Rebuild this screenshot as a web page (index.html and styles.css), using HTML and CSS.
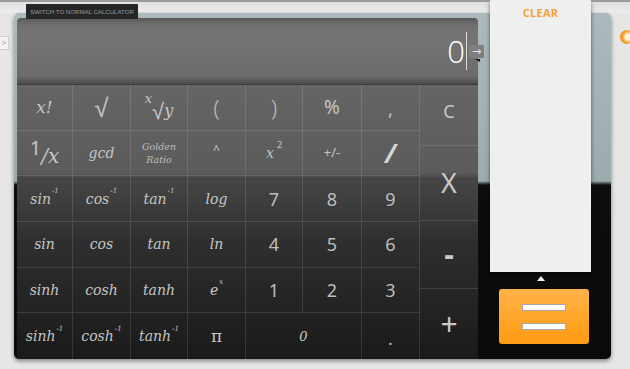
FILE: index.html
```html
<!DOCTYPE html>
<html>
<head>
<meta charset="utf-8">
<link rel="stylesheet" href="styles.css">
</head>
<body>
<div class="topbar"></div>
<div class="tooltip">SWITCH TO NORMAL CALCULATOR</div>
<div class="sidetab">&gt;</div>
<div class="orb"></div>
<div class="frame">
  <div class="calc">
    <div class="display">
      <span class="value">0</span><span class="cursor"></span>
      <span class="arrow">&#8594;</span>
      <span class="notch"></span>
    </div>
    <div class="keypad">
      <div class="grid">
        <div class="key fn big">x!</div>
        <div class="key sym root">&#8730;</div>
        <div class="key xrt"><i class="rx">x</i><span class="rs">&#8730;</span><i class="ry">y</i></div>
        <div class="key sym paren">(</div>
        <div class="key sym paren">)</div>
        <div class="key sym pct">%</div>
        <div class="key sym comma">,</div>

        <div class="key inv"><span class="one">1</span><i class="slx">/x</i></div>
        <div class="key fn">gcd</div>
        <div class="key fn golden">Golden<br>Ratio</div>
        <div class="key sym caret">^</div>
        <div class="key fn sq">x<sup>2</sup></div>
        <div class="key sym pm">+/-</div>
        <div class="key sym slash">/</div>

        <div class="key fn">sin<sup>-1</sup></div>
        <div class="key fn">cos <sup>-1</sup></div>
        <div class="key fn">tan <sup>-1</sup></div>
        <div class="key fn">log</div>
        <div class="key num">7</div>
        <div class="key num">8</div>
        <div class="key num">9</div>

        <div class="key fn">sin</div>
        <div class="key fn">cos</div>
        <div class="key fn">tan</div>
        <div class="key fn">ln</div>
        <div class="key num">4</div>
        <div class="key num">5</div>
        <div class="key num">6</div>

        <div class="key fn">sinh</div>
        <div class="key fn">cosh</div>
        <div class="key fn">tanh</div>
        <div class="key fn">e<sup>x</sup></div>
        <div class="key num">1</div>
        <div class="key num">2</div>
        <div class="key num">3</div>

        <div class="key fn last">sinh<sup>-1</sup></div>
        <div class="key fn last">cosh<sup>-1</sup></div>
        <div class="key fn last">tanh<sup>-1</sup></div>
        <div class="key fn last pi">&#960;</div>
        <div class="key fn last zero">0</div>
        <div class="key sym last dot">.</div>
      </div>
      <div class="ops">
        <div class="op op-c">C</div>
        <div class="op op-x">X</div>
        <div class="op op-minus">-</div>
        <div class="op op-plus">+</div>
      </div>
    </div>
  </div>
  <div class="side">
    <div class="history"><span class="clear">CLEAR</span></div>
    <div class="tri"></div>
    <div class="equals"><span class="bar"></span><span class="bar"></span></div>
  </div>
</div>
</body>
</html>
```

FILE: styles.css
```css
* { box-sizing: border-box; }
html, body { margin: 0; padding: 0; }
body {
  width: 630px;
  height: 369px;
  overflow: hidden;
  background: #e6e6e6;
  font-family: "Noto Sans", "Open Sans", sans-serif;
  position: relative;
}
.topbar {
  height: 13px;
  border-top: 2px solid #9c9c9c;
  background: linear-gradient(#e0e0e0, #ececec);
}
.tooltip {
  position: absolute;
  left: 26px;
  top: 4px;
  width: 112px;
  height: 15px;
  background: #262626;
  color: #9a9a9a;
  font-family: "Liberation Sans", sans-serif;
  font-size: 6.1px;
  line-height: 15px;
  white-space: nowrap;
  text-align: center;
  border-radius: 1px;
  z-index: 3;
}
.sidetab {
  position: absolute;
  left: 0;
  top: 36px;
  width: 9px;
  height: 14px;
  background: #f4f4f4;
  border: 1px solid #d0d0d0;
  border-left: none;
  color: #9a9a9a;
  font-size: 8px;
  line-height: 12px;
  text-align: center;
}
.orb {
  position: absolute;
  left: 620px;
  top: 30px;
  width: 14px;
  height: 14px;
  border-radius: 50%;
  background: radial-gradient(circle at 60% 50%, #fff4de 0 3px, #f7b450 5px, #ee9420 7px);
}
.frame {
  margin-left: 14px;
  width: 597px;
  height: 346px;
  border-radius: 5px;
  background: linear-gradient(#abbabc 0, #9cabad 168px, #0d0d0d 172px, #0a0a0a 100%);
  box-shadow: 0 2px 4px rgba(0, 0, 0, 0.45);
  display: flex;
}
.calc {
  margin-left: 3px;
  margin-top: 5px;
  width: 461px;
  display: flex;
  flex-direction: column;
}
.display {
  position: relative;
  height: 66px;
  border-radius: 4px 4px 0 0;
  background: linear-gradient(#585858 0, #6e6e6e 6px, #757575 30%, #6c6c6c 88%, #4a4a4a 100%);
  display: flex;
  align-items: center;
  justify-content: flex-end;
  padding-right: 11px;
}
.value {
  font-family: "Open Sans", "Noto Sans", sans-serif;
  font-size: 31px;
  font-weight: 300;
  color: #ffffff;
  line-height: 1;
}
.cursor {
  width: 1px;
  height: 38px;
  background: #dcdcdc;
  margin-left: 1px;
}
.arrow {
  position: absolute;
  left: 452px;
  top: 27px;
  width: 15px;
  height: 13px;
  background: #808080;
  color: #e8e8e8;
  font-family: "DejaVu Sans", sans-serif;
  font-size: 11px;
  line-height: 13px;
  text-align: center;
  border-radius: 1px;
  z-index: 2;
}
.notch {
  position: absolute;
  left: 458px;
  top: 41px;
  width: 0;
  height: 0;
  border-left: 5px solid transparent;
  border-top: 3px solid #111;
  z-index: 2;
}
.keypad {
  height: 275px;
  display: flex;
  border-top: 1px solid #3c3c3c;
  background: linear-gradient(#656565 0, #5b5b5b 32%, #464646 34%, #2e2e2e 58%, #1a1a1a 100%);
}
.grid {
  width: 403px;
  display: grid;
  grid-template-columns: 56px 58px 57px 58px 57px 59px 58px;
  grid-template-rows: repeat(6, 1fr);
}
.key {
  display: flex;
  align-items: center;
  justify-content: center;
  border-right: 1px solid rgba(255, 255, 255, 0.12);
  border-bottom: 1px solid rgba(255, 255, 255, 0.12);
  color: #c6c6c6;
  line-height: 1;
}
.key.last { border-bottom: none; }
.fn {
  font-family: "DejaVu Serif", serif;
  font-style: italic;
  font-size: 14px;
}
.fn sup {
  font-size: 7px;
  vertical-align: 0;
  position: relative;
  top: -7px;
  margin-left: 1px;
}
.fn.big { font-size: 17px; }
.sym { font-family: "Noto Sans", sans-serif; }
.root { font-size: 26px; }
.xrt { font-size: 22px; }
.xrt .rx {
  font-family: "DejaVu Serif", serif;
  font-size: 13px;
  align-self: flex-start;
  margin-top: 7px;
  margin-right: 0;
}
.xrt .rs { font-family: "Noto Sans", sans-serif; font-size: 22px; margin-top: 5px; }
.xrt .ry { font-family: "DejaVu Serif", serif; font-size: 16px; margin-top: 8px; }
.paren { font-size: 22px; font-weight: 300; color: #bcbcbc; }
.pct { font-size: 19px; }
.comma { font-size: 18px; padding-top: 4px; }
.inv .one {
  font-family: "Noto Sans", sans-serif;
  font-size: 20px;
  margin-top: -9px;
}
.inv .slx {
  font-family: "DejaVu Serif", serif;
  font-size: 20px;
  margin-top: 6px;
}
.golden { font-size: 9.5px; text-align: center; line-height: 13px; color: #bdbdbd; }
.caret { font-size: 12px; padding-bottom: 6px; }
.sq { font-size: 14px; }
.sq sup { font-family: "Noto Sans", sans-serif; font-style: normal; font-size: 9px; top: -8px; margin-left: 3px; }
.pm { font-size: 13px; }
.slash { font-size: 26px; font-weight: 700; font-style: italic; color: #d4d4d4; }
.num { font-family: "Noto Sans", sans-serif; font-size: 18px; color: #bdbdbd; }
.pi { font-size: 17px; font-style: normal; }
.zero { grid-column: span 2; font-size: 13px; }
.dot { font-size: 16px; padding-top: 6px; }
.ops {
  width: 58px;
  display: flex;
  flex-direction: column;
}
.op {
  display: flex;
  align-items: center;
  justify-content: center;
  border-bottom: 1px solid rgba(255, 255, 255, 0.12);
  color: #c8c8c8;
  font-family: "Noto Sans", sans-serif;
  line-height: 1;
}
.op-c { height: 61px; font-size: 18px; padding-bottom: 8px; }
.op-x { height: 75px; font-size: 27px; }
.op-minus { height: 69px; font-size: 30px; font-weight: 700; }
.op-plus { height: 70px; font-size: 30px; border-bottom: none; }
.side {
  width: 133px;
  display: flex;
  flex-direction: column;
}
.history {
  position: relative;
  z-index: 2;
  margin-top: -13px;
  margin-left: 12px;
  width: 101px;
  height: 272px;
  background: #efefef;
  box-shadow: 0 3px 4px rgba(0, 0, 0, 0.55);
  text-align: center;
  padding-top: 5px;
  line-height: 12px;
}
.clear {
  font-family: "Open Sans", "Noto Sans", sans-serif;
  font-weight: 700;
  font-size: 11px;
  color: #f6a135;
  letter-spacing: 0.3px;
}
.tri {
  margin-top: 4px;
  margin-left: 59px;
  width: 0;
  height: 0;
  border-left: 4px solid transparent;
  border-right: 4px solid transparent;
  border-bottom: 5px solid #f2f2f2;
}
.equals {
  margin-top: 8px;
  margin-left: 21px;
  width: 90px;
  height: 55px;
  border-radius: 3px;
  background: linear-gradient(#ffb347, #ff9a12);
  display: flex;
  flex-direction: column;
  align-items: center;
  gap: 12px;
  padding-top: 15px;
}
.bar {
  width: 44px;
  height: 7px;
  background: #ffffff;
  border: 1px solid #a9a9a9;
}
```
